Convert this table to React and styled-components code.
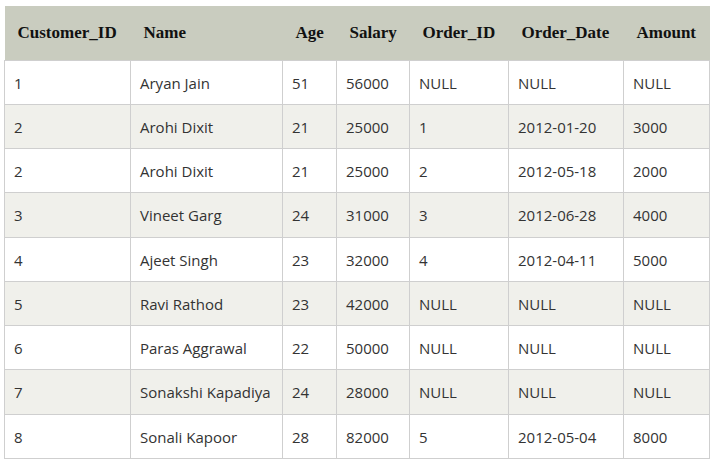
import React from "react";
import styled, { createGlobalStyle } from "styled-components";

const Global = createGlobalStyle`
  html, body { margin: 0; padding: 0; background: #ffffff; }
`;

const Wrap = styled.div`
  padding: 6px 0 0 4px;
`;

const Table = styled.table`
  border-collapse: collapse;
  table-layout: fixed;
  width: 705px;
`;

const HeadRow = styled.tr`
  background: #c9ccbf;
`;

const Th = styled.th`
  height: 54px;
  padding: 0 0 0 13px;
  text-align: left;
  font-family: "Liberation Serif", "Times New Roman", serif;
  font-weight: bold;
  font-size: 17px;
  color: #111;
  box-sizing: border-box;
  white-space: nowrap;
`;

const Row = styled.tr`
  background: ${(p) => (p.$striped ? "#f0f0eb" : "#ffffff")};
`;

const Td = styled.td`
  height: 44.25px;
  box-sizing: border-box;
  border: 1px solid #cfcfcf;
  padding: 1px 0 0 9px;
  font-family: "Open Sans", "Noto Sans", sans-serif;
  font-size: 15px;
  color: #333;
  white-space: nowrap;
`;

const widths = [126, 152, 54, 73, 99, 115, 86];
const headers = ["Customer_ID", "Name", "Age", "Salary", "Order_ID", "Order_Date", "Amount"];
const rows = [
  ["1", "Aryan Jain", "51", "56000", "NULL", "NULL", "NULL"],
  ["2", "Arohi Dixit", "21", "25000", "1", "2012-01-20", "3000"],
  ["2", "Arohi Dixit", "21", "25000", "2", "2012-05-18", "2000"],
  ["3", "Vineet Garg", "24", "31000", "3", "2012-06-28", "4000"],
  ["4", "Ajeet Singh", "23", "32000", "4", "2012-04-11", "5000"],
  ["5", "Ravi Rathod", "23", "42000", "NULL", "NULL", "NULL"],
  ["6", "Paras Aggrawal", "22", "50000", "NULL", "NULL", "NULL"],
  ["7", "Sonakshi Kapadiya", "24", "28000", "NULL", "NULL", "NULL"],
  ["8", "Sonali Kapoor", "28", "82000", "5", "2012-05-04", "8000"],
];

export default function App() {
  return (
    <>
      <Global />
      <Wrap>
        <Table>
          <colgroup>
            {widths.map((w, i) => (
              <col key={i} style={{ width: w }} />
            ))}
          </colgroup>
          <thead>
            <HeadRow>
              {headers.map((h) => (
                <Th key={h}>{h}</Th>
              ))}
            </HeadRow>
          </thead>
          <tbody>
            {rows.map((r, i) => (
              <Row key={i} $striped={i % 2 === 1}>
                {r.map((c, j) => (
                  <Td key={j}>{c}</Td>
                ))}
              </Row>
            ))}
          </tbody>
        </Table>
      </Wrap>
    </>
  );
}
